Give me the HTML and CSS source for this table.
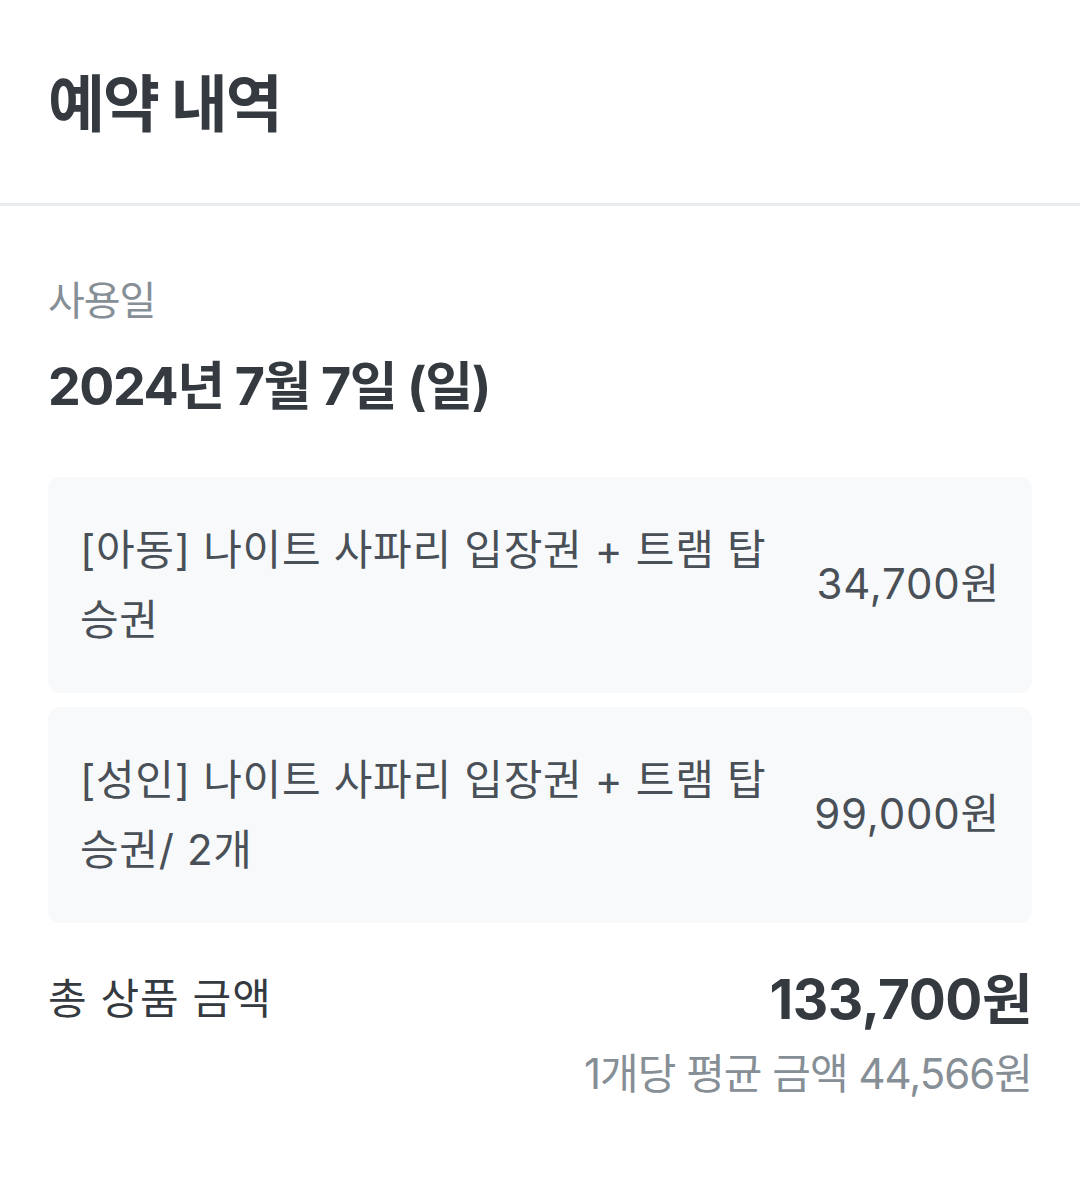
FILE: index.html
```html
<!DOCTYPE html>
<html lang="ko">
<head>
<meta charset="utf-8">
<link rel="stylesheet" href="styles.css">
</head>
<body>
<header class="header">
  <h1 class="title">예약 내역</h1>
</header>
<main class="content">
  <div class="label">사용일</div>
  <div class="date">2024년 7월 7일 (일)</div>
  <div class="items">
    <div class="item">
      <div class="item-name">[아동] 나이트 사파리 입장권 + 트램 탑승권</div>
      <div class="item-price">34,700원</div>
    </div>
    <div class="item">
      <div class="item-name">[성인] 나이트 사파리 입장권 + 트램 탑승권/ 2개</div>
      <div class="item-price">99,000원</div>
    </div>
  </div>
  <div class="total">
    <div class="total-label">총 상품 금액</div>
    <div class="total-values">
      <div class="total-price">133,700원</div>
      <div class="total-avg">1개당 평균 금액 44,566원</div>
    </div>
  </div>
</main>
</body>
</html>
```
FILE: styles.css
```css
* { box-sizing: border-box; }
html, body {
  margin: 0;
  padding: 0;
  background: #ffffff;
  font-family: Inter, "Noto Sans CJK KR", "Noto Sans", sans-serif;
  color: #343a40;
}
.header {
  height: 206px;
  padding: 0 48px;
  display: flex;
  align-items: center;
  border-bottom: 3px solid #e9ecef;
}
.title {
  margin: 0 0 4px 0;
  font-size: 62px;
  font-weight: 700;
  letter-spacing: -2px;
  color: #343a40;
}
.content {
  padding: 67px 48px 0 48px;
}
.label {
  font-size: 40px;
  line-height: 56px;
  color: #868e96;
  letter-spacing: -1px;
}
.date {
  margin-top: 28px;
  font-size: 52px;
  line-height: 60px;
  font-weight: 700;
  letter-spacing: -1.4px;
  color: #343a40;
}
.items {
  margin-top: 60px;
  display: flex;
  flex-direction: column;
  gap: 14px;
}
.item {
  background: #f8f9fa;
  border-radius: 12px;
  height: 216px;
  padding: 0 32px;
  display: flex;
  align-items: center;
  justify-content: space-between;
  gap: 30px;
}
.item-name {
  width: 700px;
  font-size: 42px;
  line-height: 70px;
  color: #495057;
  letter-spacing: 0.7px;
}
.item-price {
  margin-bottom: 10px;
  font-size: 42px;
  color: #495057;
  letter-spacing: 0.8px;
  white-space: nowrap;
}
.total {
  margin-top: 41px;
  display: flex;
  justify-content: space-between;
  align-items: flex-start;
}
.total-label {
  font-size: 42px;
  line-height: 70px;
  color: #343a40;
  letter-spacing: 1px;
}
.total-values {
  display: flex;
  flex-direction: column;
  align-items: flex-end;
}
.total-price {
  font-size: 55px;
  line-height: 70px;
  font-weight: 700;
  color: #343a40;
  letter-spacing: -0.5px;
}
.total-avg {
  margin-top: 12px;
  font-size: 42px;
  line-height: 56px;
  color: #868e96;
  letter-spacing: -1px;
}
```
